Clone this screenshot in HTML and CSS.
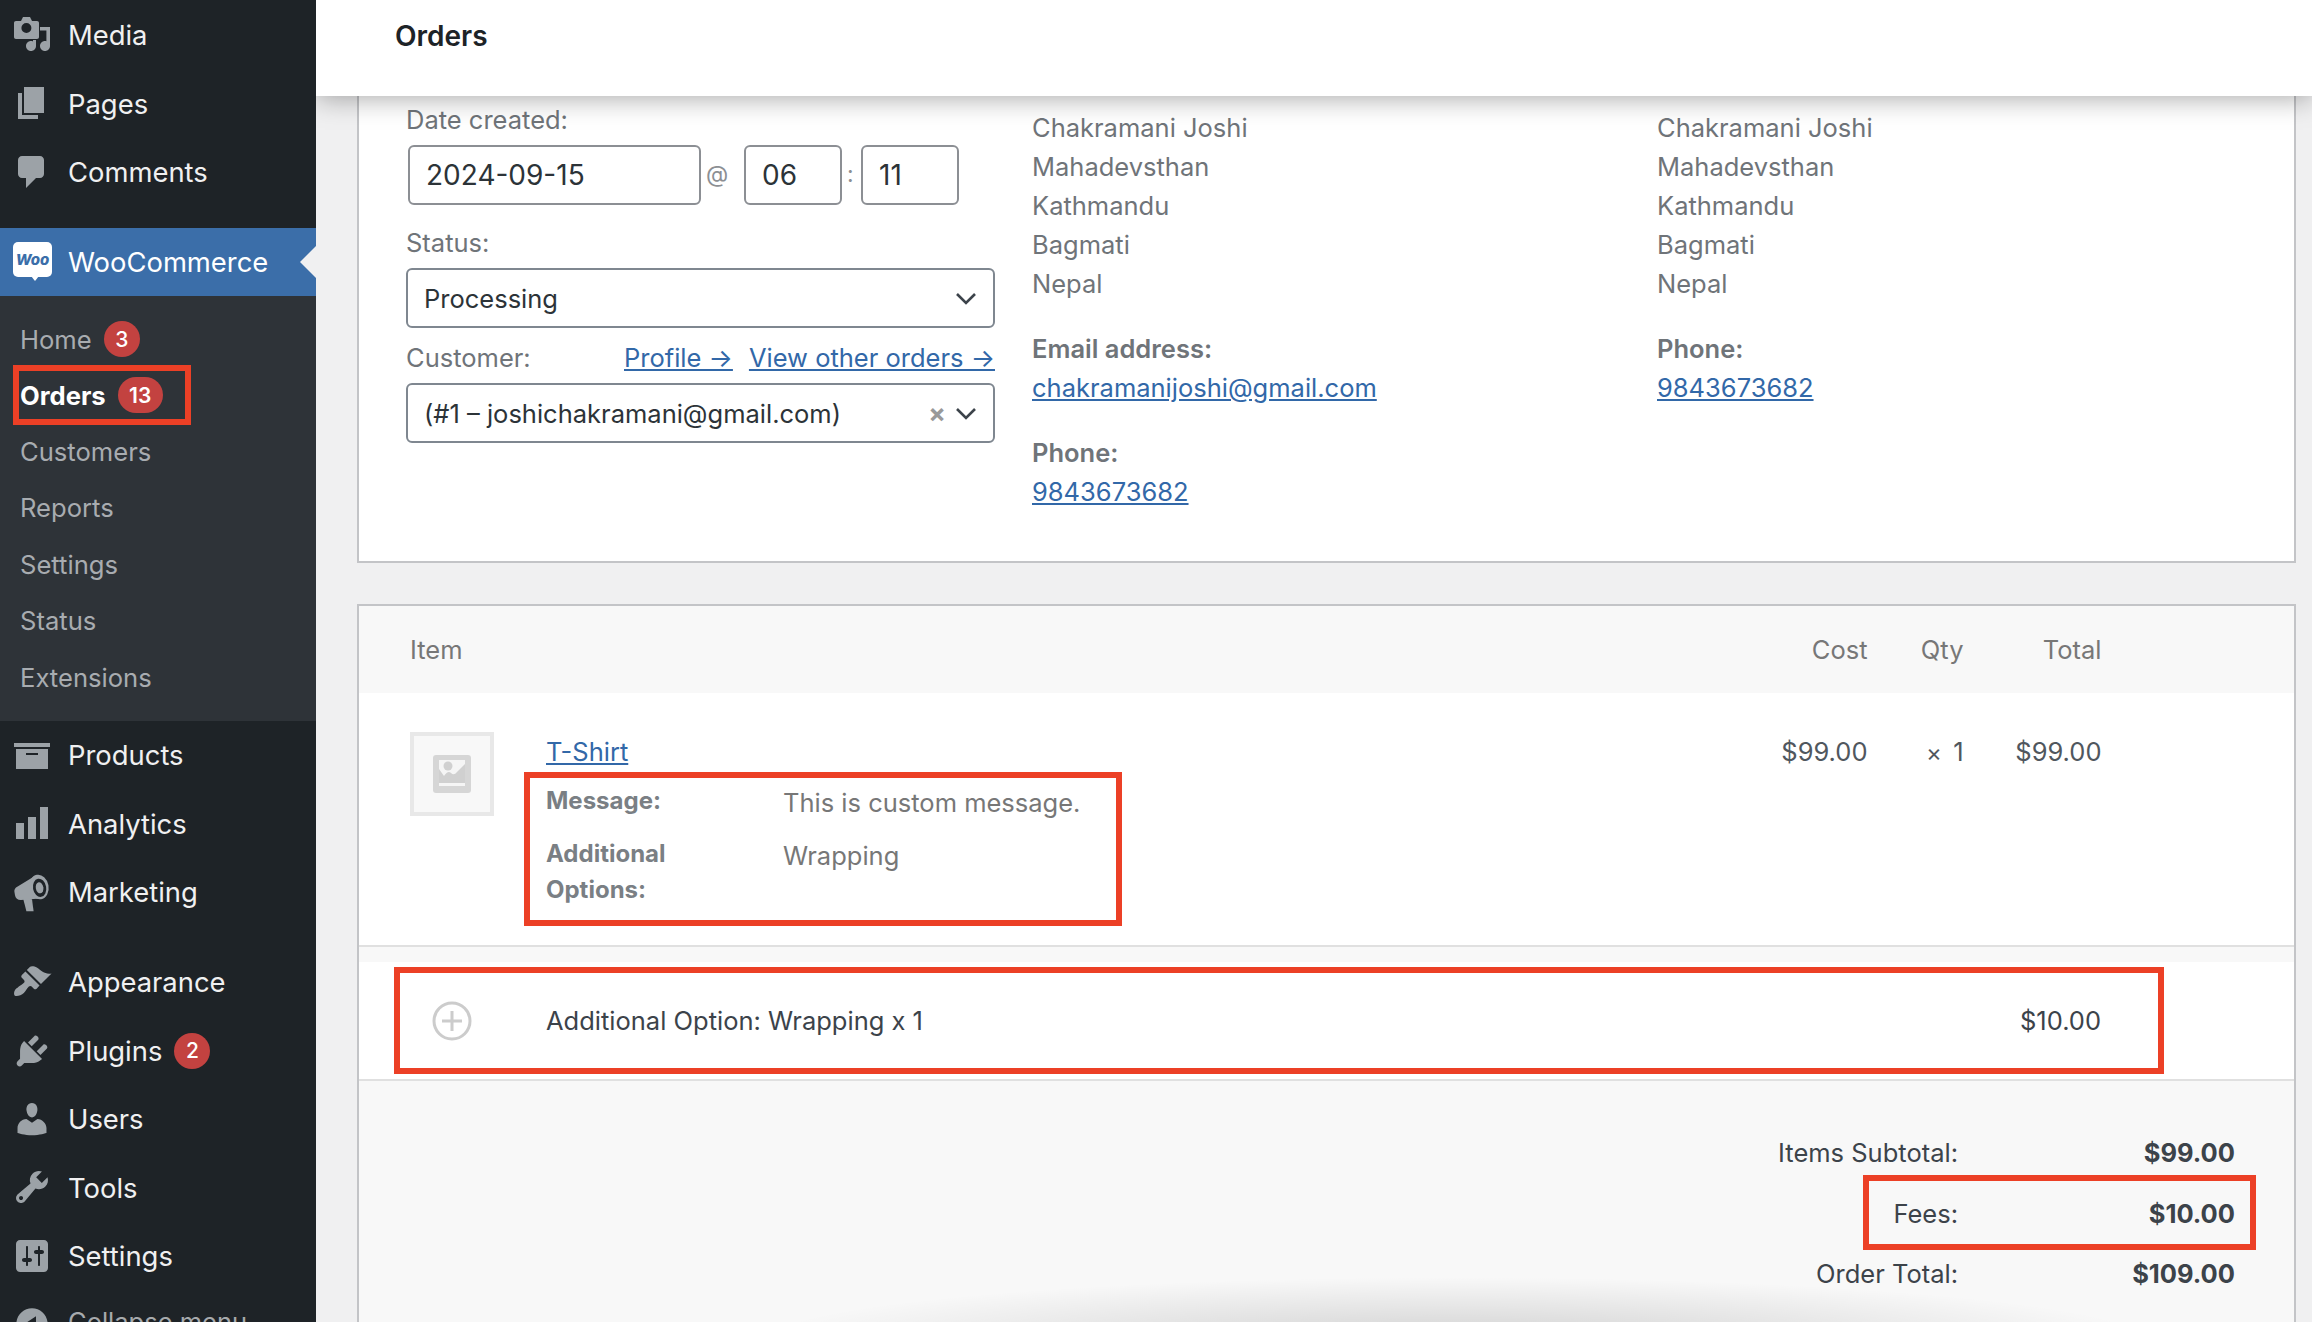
FILE: index.html
```html
<!DOCTYPE html>
<html lang="en">
<head>
  <meta charset="UTF-8">
  <title>Orders</title>
  <link rel="stylesheet" href="styles.css">
</head>
<body>
  <aside class="sidebar">
    <ul class="menu menu-top">
      <li class="menu-item"><svg class="menu-icon" viewBox="0 0 20 20"><path fill-rule="evenodd" d="M1 4c0-.6.4-1 1-1h2.500L5.500 1h3.500l1 2h2.500c.6 0 1 .4 1 1v7c0 .6-.4 1-1 1H2c-.6 0-1-.4-1-1zM7.200 4a2.500 2.500 0 1 0 0 5 2.500 2.500 0 0 0 0-5z"/><path d="M14 6h5v9.500c0 1.400-1.100 2.500-2.500 2.500S14 16.900 14 15.500s1.100-2.500 2.500-2.500c.3 0 .5 0 .7.100V7.700H14zM10.500 12.500H12v3c0 1.400-1.100 2.500-2.500 2.500S7 16.900 7 15.500 8.100 13 9.500 13c.4 0 .7.100 1 .2z"/></svg>Media</li>
      <li class="menu-item"><svg class="menu-icon" viewBox="0 0 20 20"><path d="M6 15V2h10v13H6zm-1 1h8v2H3V5h2v11z"/></svg>Pages</li>
      <li class="menu-item"><svg class="menu-icon" viewBox="0 0 20 20"><path d="M5 2h9c1.100 0 2 .9 2 2v7c0 1.100-.9 2-2 2h-2l-5 5v-5H5c-1.100 0-2-.9-2-2V4c0-1.100.9-2 2-2z"/></svg>Comments</li>
    </ul>

    <div class="menu-current">
      <div class="woo-logo"><span>Woo</span></div>
      WooCommerce
    </div>
    <ul class="submenu">
      <li class="sub-item">Home <span class="badge">3</span></li>
      <li class="sub-item sub-active"><b>Orders</b> <span class="badge badge-wide">13</span></li>
      <li class="sub-item">Customers</li>
      <li class="sub-item">Reports</li>
      <li class="sub-item">Settings</li>
      <li class="sub-item">Status</li>
      <li class="sub-item">Extensions</li>
    </ul>

    <ul class="menu">
      <li class="menu-item"><svg class="menu-icon" viewBox="0 0 20 20"><path d="M19 4v2H1V4h18zM2 7h16v10H2V7zm11 3V9H7v1h6z"/></svg>Products</li>
      <li class="menu-item"><svg class="menu-icon" viewBox="0 0 20 20"><path d="M18 18V2h-4v16h4zm-6 0V7H8v11h4zm-6 0v-8H2v8h4z"/></svg>Analytics</li>
      <li class="menu-item"><svg class="menu-icon" viewBox="0 0 20 20"><path d="M2 7.800l9-5.500 3 11-9.500 .7c-1.500 .1-2.800-.9-3-2.400l-.3-1.700c-.1-.8 .2-1.500 .8-2.100z"/><path d="M5.500 13l4.500 .6 .8 6H7.200z"/><ellipse cx="13.500" cy="7.500" rx="4.800" ry="6.200" transform="rotate(-10 13.500 7.500)"/><ellipse class="icon-cut" cx="13.800" cy="7.900" rx="3.300" ry="4.600" transform="rotate(-10 13.800 7.900)"/><ellipse cx="13.800" cy="7.900" rx="1.900" ry="2.800" transform="rotate(-10 13.800 7.900)"/></svg>Marketing</li>
    </ul>

    <ul class="menu menu-second">
      <li class="menu-item"><svg class="menu-icon" viewBox="0 0 20 20"><path d="M14.480 11.060L7.410 3.990l1.500-1.500c.5-.56 2.300-.47 3.510.32 1.210.8 1.430 1.280 2.910 2.100 1.180.64 2.450 1.260 4.450.85zm-.71.71L6.700 4.700 4.930 6.470c-.39.39-.39 1.020 0 1.410l1.060 1.060c.39.39.39 1.030 0 1.420-.6.6-1.430 1.110-2.210 1.690-.35.26-.7.53-1.010.84C1.430 13.230.6 15.600 1.300 16.700c.7.800 3.300.1 4.600-1.200.31-.31.58-.66.84-1.010.58-.78 1.090-1.610 1.690-2.210.39-.39 1.030-.39 1.420 0l1.060 1.060c.39.39 1.020.39 1.410 0z"/></svg>Appearance</li>
      <li class="menu-item"><svg class="menu-icon" viewBox="0 0 20 20"><path d="M13.110 4.360L9.870 7.600 8 5.730l3.240-3.240c.35-.34 1.050-.2 1.560.32.52.51.66 1.210.31 1.550zm-8 1.770l.91-1.120 9.010 9.010-1.190.84c-.71.71-2.630 1.160-3.820 1.160H6.140L4.900 17.260c-.59.59-1.540.59-2.120 0-.59-.58-.59-1.530 0-2.120l1.240-1.240v-3.880c0-1.130.4-3.190 1.090-3.890zm7.260 3.970l3.240-3.240c.34-.35 1.040-.21 1.550.31.52.51.66 1.210.31 1.550l-3.240 3.250z"/></svg>Plugins <span class="badge badge-plugins">2</span></li>
      <li class="menu-item"><svg class="menu-icon" viewBox="0 0 20 20"><path d="M10 9.250c-2.270 0-2.730-3.440-2.730-3.440C7 4.020 7.820 2 9.970 2c2.160 0 2.980 2.020 2.710 3.810 0 0-.41 3.440-2.680 3.440zm0 2.570L12.720 10c2.390 0 4.520 2.330 4.520 4.530v2.490s-3.650 1.130-7.240 1.130c-3.650 0-7.240-1.130-7.240-1.130v-2.490c0-2.250 1.940-4.480 4.470-4.480z"/></svg>Users</li>
      <li class="menu-item"><svg class="menu-icon" viewBox="0 0 20 20"><path fill-rule="evenodd" d="M16.680 9.770c-1.340 1.340-3.300 1.670-4.950.99l-5.410 6.520c-.99.99-2.590.99-3.580 0s-.99-2.590 0-3.570l6.520-5.420c-.68-1.650-.35-3.610.99-4.950 1.280-1.280 3.120-1.620 4.720-1.060l-2.890 2.890 2.820 2.820 2.860-2.870c.53 1.580.18 3.390-1.080 4.650zM3.810 16.210c.4.390 1.040.39 1.430 0 .4-.4.4-1.040 0-1.430-.39-.4-1.030-.4-1.430 0-.39.39-.39 1.030 0 1.430z"/></svg>Tools</li>
      <li class="menu-item"><svg class="menu-icon" viewBox="0 0 20 20"><path fill-rule="evenodd" d="M18 16V4c0-1.100-.9-2-2-2H4c-1.100 0-2 .9-2 2v12c0 1.100.9 2 2 2h12c1.100 0 2-.9 2-2zM8 11h1c.55 0 1 .45 1 1s-.45 1-1 1H8v1.500c0 .28-.22.5-.5.5s-.5-.22-.5-.5V13H6c-.55 0-1-.45-1-1s.45-1 1-1h1V5.500c0-.28.22-.5.5-.5s.5.22.5.5V11zm5-2h-1c-.55 0-1-.45-1-1s.45-1 1-1h1V5.500c0-.28.22-.5.5-.5s.5.22.5.5V7h1c.55 0 1 .45 1 1s-.45 1-1 1h-1v5.500c0 .28-.22.5-.5.5s-.5-.22-.5-.5V9z"/></svg>Settings</li>
      <li class="menu-item menu-collapse"><svg class="menu-icon" viewBox="0 0 20 20"><path fill-rule="evenodd" d="M10 2.160c4.330 0 7.840 3.510 7.840 7.840s-3.510 7.840-7.840 7.840S2.160 14.330 2.160 10 5.710 2.160 10 2.160zm2 11.720V6.120L6.180 9.970z"/></svg>Collapse menu</li>
    </ul>
  </aside>

  <main class="main">
    <header class="topbar">Orders</header>

    <div class="content">
      <section class="card order-data">
        <div class="col-general">
          <div class="field-label">Date created:</div>
          <div class="date-row">
            <input class="input input-date" value="2024-09-15">
            <span class="date-sep date-at">@</span>
            <input class="input input-time" value="06">
            <span class="date-sep date-colon">:</span>
            <input class="input input-time" value="11">
          </div>

          <div class="field-label label-status">Status:</div>
          <div class="select">
            <span>Processing</span>
            <svg class="chevron" viewBox="0 0 22 14"><path d="M2 3l9 9 9-9"/></svg>
          </div>

          <div class="field-label label-customer">
            <span>Customer:</span>
            <span class="customer-links"><a href="#">Profile →</a><a href="#">View other orders →</a></span>
          </div>
          <div class="select">
            <span>(#1 – joshichakramani@gmail.com)</span>
            <span class="select-clear">×</span>
            <svg class="chevron" viewBox="0 0 22 14"><path d="M2 3l9 9 9-9"/></svg>
          </div>
        </div>

        <div class="col-address">
          <p class="address">Chakramani Joshi<br>Mahadevsthan<br>Kathmandu<br>Bagmati<br>Nepal</p>
          <div class="contact-label">Email address:</div>
          <a href="#">chakramanijoshi@gmail.com</a>
          <div class="contact-label contact-next">Phone:</div>
          <a href="#">9843673682</a>
        </div>

        <div class="col-address">
          <p class="address">Chakramani Joshi<br>Mahadevsthan<br>Kathmandu<br>Bagmati<br>Nepal</p>
          <div class="contact-label">Phone:</div>
          <a href="#">9843673682</a>
        </div>
      </section>

      <section class="card order-items">
        <div class="items-head">
          <span>Item</span>
          <span></span>
          <span class="num">Cost</span>
          <span class="num">Qty</span>
          <span class="num">Total</span>
        </div>

        <div class="item-row">
          <div class="thumb">
            <svg viewBox="0 0 38 38" width="38" height="38"><rect width="38" height="38" rx="3" fill="#d6d6d6"/><rect x="6" y="5" width="26" height="26" fill="#f5f5f5"/><circle cx="15" cy="11" r="4.500" fill="#d0d0d0"/><path d="M6 28V14l5 7q4-6 7-3t6-1l8-8v19z" fill="#d0d0d0"/></svg>
          </div>
          <div class="item-info">
            <a href="#">T-Shirt</a>
            <dl class="item-meta">
              <dt>Message:</dt>
              <dd>This is custom message.</dd>
              <dt>Additional Options:</dt>
              <dd>Wrapping</dd>
            </dl>
          </div>
          <div class="num">$99.00</div>
          <div class="num"><small>×</small> 1</div>
          <div class="num">$99.00</div>
        </div>

        <div class="fee-strip">
          <div class="fee-row">
            <svg class="fee-icon" viewBox="0 0 40 40"><circle cx="20" cy="20" r="18" fill="none" stroke="#ccc" stroke-width="3"/><path d="M20 10v20M10 20h20" stroke="#ccc" stroke-width="3"/></svg>
            <span class="fee-name">Additional Option: Wrapping x 1</span>
            <span>$10.00</span>
          </div>
        </div>

        <div class="totals">
          <div class="total-row"><span>Items Subtotal:</span><b>$99.00</b></div>
          <div class="total-row total-fees"><span>Fees:</span><b>$10.00</b></div>
          <div class="total-row"><span>Order Total:</span><b>$109.00</b></div>
        </div>
      </section>
    </div>

    <div class="bottom-shade"></div>
  </main>
</body>
</html>
```

FILE: styles.css
```css
* {
  box-sizing: border-box;
}

html, body {
  height: 1322px;
}

body {
  margin: 0;
  display: flex;
  overflow: hidden;
  background: #f0f0f1;
  font-family: Inter, 'Noto Sans', sans-serif;
  font-size: 25.500px;
  color: #2c3338;
}

a {
  color: #3268a8;
}

ul {
  list-style: none;
  margin: 0;
  padding: 0;
}

/* Sidebar */
.sidebar {
  width: 316px;
  flex: none;
  height: 1322px;
  overflow: hidden;
  background: #1e2327;
  color: #f0f0f1;
  position: relative;
  z-index: 2;
}

.menu-top {
  padding-top: 1px;
  margin-bottom: 21.800px;
}

.menu-second {
  margin-top: 22px;
}

.menu-item {
  height: 68.400px;
  display: flex;
  align-items: center;
  padding-left: 68px;
  position: relative;
  font-size: 27.400px;
}

.menu-icon {
  position: absolute;
  left: 12px;
  top: 14px;
  width: 40px;
  height: 40px;
  fill: #9ca2a7;
}

.icon-cut {
  fill: #1e2327;
}

.menu-collapse {
  padding-bottom: 6px;
  color: #a7aaad;
  font-size: 25.500px;
}

.menu-current {
  height: 68px;
  display: flex;
  align-items: center;
  padding-left: 68px;
  position: relative;
  background: #3b6ea9;
  color: #fff;
  font-size: 27.400px;
}

.menu-current::after {
  content: "";
  position: absolute;
  right: 0;
  top: 18px;
  border: 16px solid transparent;
  border-right-color: #f0f0f1;
  border-left: 0;
}

.woo-logo {
  position: absolute;
  left: 13px;
  top: 14px;
  width: 39px;
  height: 35px;
  background: #fff;
  border-radius: 5px;
  display: flex;
  align-items: center;
  justify-content: center;
}

.woo-logo::after {
  content: "";
  position: absolute;
  left: 18px;
  bottom: -4px;
  border-top: 5px solid #fff;
  border-left: 4px solid transparent;
  border-right: 4px solid transparent;
}

.woo-logo span {
  color: #3b6ea9;
  font-size: 15px;
  font-weight: 800;
  font-style: italic;
}

.submenu {
  background: #2e3338;
  padding: 15px 0;
  height: 425px;
}

.sub-item {
  height: 56.400px;
  display: flex;
  align-items: center;
  gap: 12px;
  padding-left: 20px;
  color: #a8acb0;
  font-size: 25.600px;
}

.sub-active {
  width: 178px;
  height: 60px;
  margin: -2px 0 -2px 13px;
  padding-left: 1px;
  border: 6px solid #ec4026;
  color: #fff;
}

.badge {
  width: 36px;
  height: 36px;
  border-radius: 18px;
  background: #c34240;
  color: #fff;
  font-size: 21px;
  font-weight: 500;
  display: flex;
  align-items: center;
  justify-content: center;
}

.badge-wide {
  width: 45px;
  font-weight: 600;
}

.badge-plugins {
  margin-left: 12px;
}

/* Main area */
.main {
  flex: 1;
  height: 1322px;
  position: relative;
  overflow: hidden;
}

.topbar {
  height: 96px;
  background: #fff;
  padding: 0 0 24px 79px;
  display: flex;
  align-items: center;
  position: relative;
  z-index: 1;
  box-shadow: 0 2px 26px rgba(0, 0, 0, .35);
  font-size: 28px;
  font-weight: 600;
  color: #1d2327;
}

.content {
  padding: 0 16px 0 41px;
}

.card {
  background: #fff;
  border: 2px solid #c3c4c7;
}

.order-data {
  height: 467px;
  border-top: 0;
  display: grid;
  grid-template-columns: 626px 625px 1fr;
  padding-left: 47px;
  color: #6f7479;
}

.order-items {
  margin-top: 41px;
  height: 800px;
  background: #f8f8f8;
  border-bottom: 0;
}

/* Order data */
.col-general {
  width: 589px;
  padding-top: 6px;
}

.field-label {
  height: 36px;
  line-height: 36px;
}

.label-status {
  margin-top: 20px;
}

.label-customer {
  margin-top: 12px;
  display: flex;
  justify-content: space-between;
}

.customer-links {
  display: flex;
  gap: 16px;
}

.date-row {
  display: flex;
  align-items: center;
  margin-top: 7px;
  padding-left: 2px;
}

.input {
  height: 60px;
  border: 2px solid #8c8f94;
  border-radius: 6px;
  padding: 0 16px;
  font: inherit;
  font-size: 28px;
  color: #2c3338;
  background: #fff;
}

.input-date {
  width: 293px;
}

.input-time {
  width: 98px;
}

.date-sep {
  color: #8c8f94;
  font-size: 23px;
  margin-top: -2px;
}

.date-at {
  width: 43px;
  padding-left: 5px;
}

.date-colon {
  width: 19px;
  padding-left: 5px;
}

.select {
  height: 60px;
  margin-top: 7px;
  border: 2px solid #7f8790;
  border-radius: 6px;
  padding: 0 16px;
  display: flex;
  align-items: center;
  color: #2c3338;
}

.select > span:first-child {
  flex: 1;
}

.select-clear {
  color: #999;
  font-size: 26px;
  font-weight: 700;
  margin-right: 9px;
}

.chevron {
  width: 22px;
  height: 14px;
  fill: none;
  stroke: #3c434a;
  stroke-width: 2.600;
}

.col-address {
  padding-top: 12px;
  line-height: 39px;
}

.address {
  margin: 0;
}

.contact-label {
  margin-top: 26px;
  font-weight: 600;
}

.contact-next {
  margin-top: 26px;
}

/* Items */
.items-head {
  height: 87px;
  display: grid;
  grid-template-columns: 136px 1fr 120px 96px 138px;
  align-items: center;
  padding: 0 192.500px 0 51px;
  color: #777;
}

.num {
  text-align: right;
}

.item-row {
  height: 254px;
  background: #fff;
  border-bottom: 2px solid #e0e0e0;
  display: grid;
  grid-template-columns: 136px 1fr 120px 96px 138px;
  padding: 39px 192.500px 0 51px;
  line-height: 39px;
  color: #6f7479;
}

.thumb {
  width: 84px;
  height: 84px;
  background: #f8f8f8;
  border: 4px solid #e8e8e8;
  display: flex;
  align-items: center;
  justify-content: center;
}

.item-info {
  position: relative;
}

.item-row .num {
  color: #50575e;
}

.item-row small {
  font-size: 24px;
  margin-right: 4px;
}

.item-meta {
  display: grid;
  grid-template-columns: 237px 1fr;
  row-gap: 2px;
  width: 598px;
  height: 154px;
  margin: 1px 0 0 -22px;
  padding: 5px 0 0 16px;
  border: 6px solid #ec4026;
  line-height: 36px;
}

.item-meta dt {
  width: 150px;
  font-size: 24px;
  font-weight: 700;
  color: #7a7f84;
}

.item-meta dd {
  margin: 0;
  padding-top: 2px;
  color: #777;
}

.fee-strip {
  margin-top: 15px;
  height: 119px;
  padding-top: 5px;
  background: #fff;
  border-bottom: 2px solid #e0e0e0;
}

.fee-row {
  width: 1770px;
  height: 107px;
  margin-left: 35px;
  padding: 0 57px 0 32px;
  border: 6px solid #ec4026;
  display: flex;
  align-items: center;
  color: #3c434a;
}

.fee-icon {
  width: 40px;
  height: 40px;
  margin-right: 74px;
}

.fee-name {
  flex: 1;
}

.totals {
  padding-top: 41px;
}

.total-row {
  height: 60px;
  display: flex;
  justify-content: flex-end;
  align-items: center;
  padding-right: 59px;
  color: #3c434a;
}

.total-row b {
  width: 277px;
  text-align: right;
  font-weight: 700;
}

.total-fees {
  width: 393px;
  height: 75px;
  margin: -7px 38px -7px auto;
  padding-right: 15px;
  padding-top: 2px;
  border: 6px solid #ec4026;
}

.bottom-shade {
  position: absolute;
  left: 440px;
  bottom: -85px;
  width: 1400px;
  height: 130px;
  background: radial-gradient(ellipse closest-side, rgba(0, 0, 0, .16), rgba(0, 0, 0, 0));
}
```
